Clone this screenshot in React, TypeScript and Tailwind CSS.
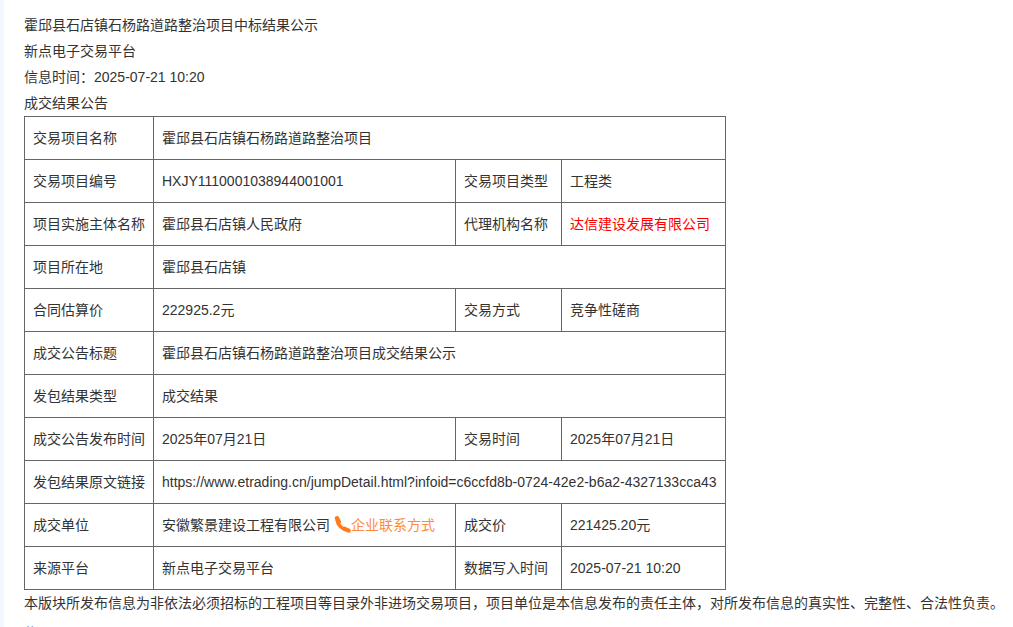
import React from 'react';

const Label: React.FC<{ children: React.ReactNode }> = ({ children }) => (
  <td className="border border-[#666] px-2 align-middle whitespace-nowrap">{children}</td>
);

const Value: React.FC<{ children: React.ReactNode; span?: number }> = ({ children, span }) => (
  <td colSpan={span} className="border border-[#666] px-2 align-middle whitespace-nowrap">
    {children}
  </td>
);

// 电话图标
const PhoneIcon = () => (
  <svg viewBox="0 0 17 17" className="inline-block w-[17px] h-[17px] align-[-3px]" fill="none" stroke="#ff7a1a" strokeLinecap="round">
    <path d="M3.200 4.500C3.800 9 8 13.500 14 14.300" strokeWidth="3.400" />
    <path d="M3 2.300 L4.800 6" strokeWidth="4.400" />
    <path d="M10.800 12.700 L14.800 14.600" strokeWidth="4" />
  </svg>
);

export default function App() {
  return (
    <div className="h-[627px] overflow-hidden flex bg-white text-[#333] text-sm leading-[26px] font-['Liberation_Sans','Noto_Sans_CJK_SC',sans-serif]">
      <div className="w-1 shrink-0 bg-[#f3f7ff]" />
      <div className="flex-1 pt-3 pl-5">
        <p>霍邱县石店镇石杨路道路整治项目中标结果公示</p>
        <p>新点电子交易平台</p>
        <p>信息时间：2025-07-21 10:20</p>
        <p>成交结果公告</p>
        <table className="border-collapse table-fixed w-[701px]">
          <colgroup>
            <col className="w-[129px]" />
            <col className="w-[302px]" />
            <col className="w-[106px]" />
            <col className="w-[164px]" />
          </colgroup>
          <tbody>
            <tr className="h-[43px]">
              <Label>交易项目名称</Label>
              <Value span={3}>霍邱县石店镇石杨路道路整治项目</Value>
            </tr>
            <tr className="h-[43px]">
              <Label>交易项目编号</Label>
              <Value>HXJY1110001038944001001</Value>
              <Label>交易项目类型</Label>
              <Value>工程类</Value>
            </tr>
            <tr className="h-[43px]">
              <Label>项目实施主体名称</Label>
              <Value>霍邱县石店镇人民政府</Value>
              <Label>代理机构名称</Label>
              <Value><span className="text-[#ff0000]">达信建设发展有限公司</span></Value>
            </tr>
            <tr className="h-[43px]">
              <Label>项目所在地</Label>
              <Value span={3}>霍邱县石店镇</Value>
            </tr>
            <tr className="h-[43px]">
              <Label>合同估算价</Label>
              <Value>222925.2元</Value>
              <Label>交易方式</Label>
              <Value>竞争性磋商</Value>
            </tr>
            <tr className="h-[43px]">
              <Label>成交公告标题</Label>
              <Value span={3}>霍邱县石店镇石杨路道路整治项目成交结果公示</Value>
            </tr>
            <tr className="h-[43px]">
              <Label>发包结果类型</Label>
              <Value span={3}>成交结果</Value>
            </tr>
            <tr className="h-[43px]">
              <Label>成交公告发布时间</Label>
              <Value>2025年07月21日</Value>
              <Label>交易时间</Label>
              <Value>2025年07月21日</Value>
            </tr>
            <tr className="h-[43px]">
              <Label>发包结果原文链接</Label>
              <Value span={3}>https://www.etrading.cn/jumpDetail.html?infoid=c6ccfd8b-0724-42e2-b6a2-4327133cca43</Value>
            </tr>
            <tr className="h-[43px]">
              <Label>成交单位</Label>
              <Value>
                安徽繁景建设工程有限公司{' '}
                <span className="text-[#ff8a3c]"><PhoneIcon />企业联系方式</span>
              </Value>
              <Label>成交价</Label>
              <Value>221425.20元</Value>
            </tr>
            <tr className="h-[43px]">
              <Label>来源平台</Label>
              <Value>新点电子交易平台</Value>
              <Label>数据写入时间</Label>
              <Value>2025-07-21 10:20</Value>
            </tr>
          </tbody>
        </table>
        <p>本版块所发布信息为非依法必须招标的工程项目等目录外非进场交易项目，项目单位是本信息发布的责任主体，对所发布信息的真实性、完整性、合法性负责。</p>
        <p className="mt-[4px]">信</p>
      </div>
    </div>
  );
}
